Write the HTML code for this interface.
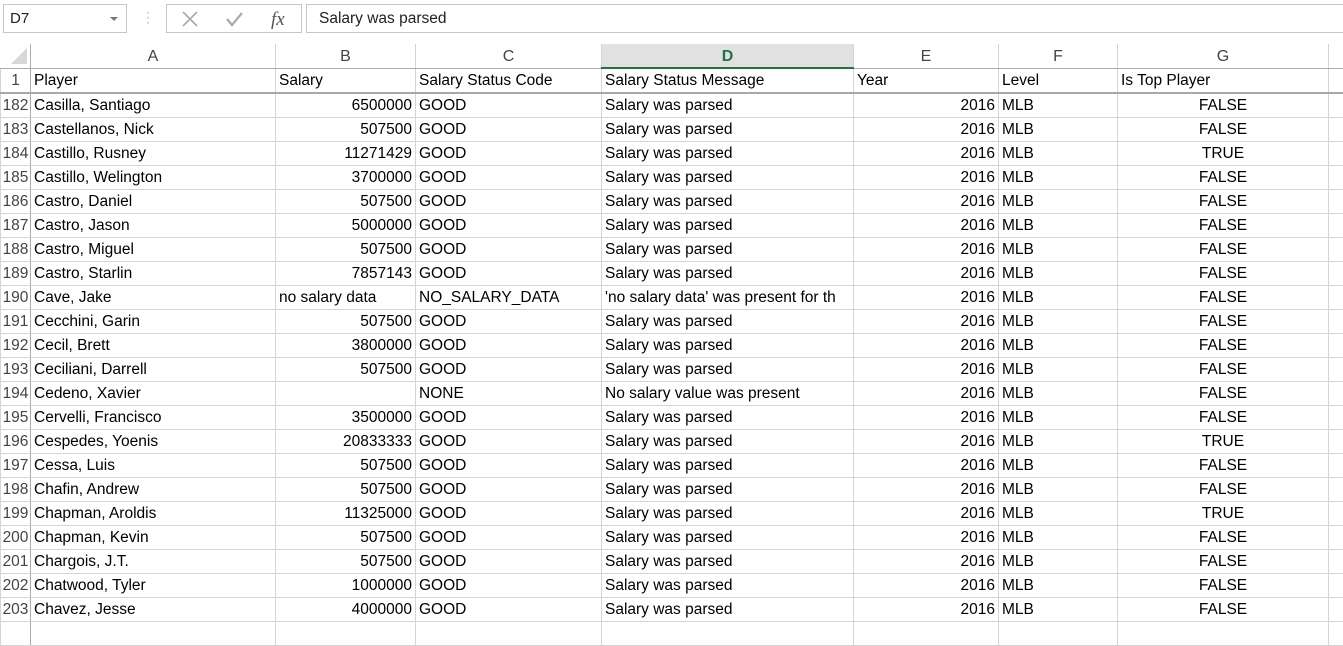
<!DOCTYPE html>
<html><head><meta charset="utf-8">
<style>
body{margin:0;width:1343px;height:625px;overflow:hidden;background:#fff;font-family:"Liberation Sans",sans-serif;position:relative}
.nb{position:absolute;left:3px;top:4px;width:124px;height:29px;border:1px solid #c6c6c6;font-size:15px;line-height:28px;padding-left:6px;box-sizing:border-box;color:#222}
.nb:after{content:"";position:absolute;right:8px;top:12px;border-left:4px solid transparent;border-right:4px solid transparent;border-top:4px solid #777}
.dots{position:absolute;left:146px;top:10px;color:#999;font-size:12px;line-height:5px}
.btns{position:absolute;left:166px;top:4px;width:136px;height:29px;border:1px solid #c6c6c6;box-sizing:border-box}
.fb{position:absolute;left:306px;top:4px;width:1045px;height:29px;border:1px solid #c6c6c6;box-sizing:border-box;font-size:15.5px;line-height:27px;padding-left:12px;color:#222}
table{position:absolute;left:0;top:44px;width:1343px;border-collapse:collapse;table-layout:fixed;font-size:15.5px}
td{height:23px;padding:0 3px;border:1px solid #d4d4d4;white-space:nowrap;overflow:hidden;color:#000;line-height:23px;vertical-align:middle}
tr.h td{height:20px;padding-top:3px;background:#fff;text-align:center;color:#444;border-bottom:1px solid #ababab;font-size:16px;line-height:20px;border-top:none;vertical-align:top}
td.r{text-align:center;color:#444;padding:0;border-right:1px solid #ababab}
tr.h td.sel{background:#e1e1e1;color:#217346;font-weight:bold;border-bottom:2px solid #217346}
tr.f td{border-bottom:2px solid #a8a8a8}
.n{text-align:right}.c{text-align:center}
</style></head><body>
<div class="nb">D7</div>
<div class="dots">·<br>·<br>·</div>
<div class="btns">
<svg width="136" height="28" style="position:absolute;left:0;top:0">
<path d="M16 7l14 14M30 7L16 21" stroke="#aaa" stroke-width="1.6" fill="none"/>
<path d="M60 14l5 6 10-12" stroke="#aaa" stroke-width="2.2" fill="none"/>
<text x="104" y="20" font-family="Liberation Serif" font-style="italic" font-size="19" fill="#555">fx</text>
</svg></div>
<div class="fb">Salary was parsed</div>
<table>
<colgroup><col style="width:30px"><col style="width:245px"><col style="width:140px"><col style="width:186px"><col style="width:252px"><col style="width:145px"><col style="width:119px"><col style="width:211px"><col style="width:15px"></colgroup>
<tr class="h"><td class="r" style="border-left:none;padding-top:0"><svg width="24" height="20" style="display:block;margin:2px 0 0 4px"><path d="M22 2L22 18L6 18Z" fill="#d8d8d8"/></svg></td><td>A</td><td>B</td><td>C</td><td class="sel">D</td><td>E</td><td>F</td><td>G</td><td></td></tr>
<tr class="f"><td class="r">1</td><td>Player</td><td>Salary</td><td>Salary Status Code</td><td>Salary Status Message</td><td>Year</td><td>Level</td><td>Is Top Player</td><td></td></tr>
<tr><td class="r">182</td><td>Casilla, Santiago</td><td class="n">6500000</td><td>GOOD</td><td>Salary was parsed</td><td class="n">2016</td><td>MLB</td><td class="c">FALSE</td><td></td></tr>
<tr><td class="r">183</td><td>Castellanos, Nick</td><td class="n">507500</td><td>GOOD</td><td>Salary was parsed</td><td class="n">2016</td><td>MLB</td><td class="c">FALSE</td><td></td></tr>
<tr><td class="r">184</td><td>Castillo, Rusney</td><td class="n">11271429</td><td>GOOD</td><td>Salary was parsed</td><td class="n">2016</td><td>MLB</td><td class="c">TRUE</td><td></td></tr>
<tr><td class="r">185</td><td>Castillo, Welington</td><td class="n">3700000</td><td>GOOD</td><td>Salary was parsed</td><td class="n">2016</td><td>MLB</td><td class="c">FALSE</td><td></td></tr>
<tr><td class="r">186</td><td>Castro, Daniel</td><td class="n">507500</td><td>GOOD</td><td>Salary was parsed</td><td class="n">2016</td><td>MLB</td><td class="c">FALSE</td><td></td></tr>
<tr><td class="r">187</td><td>Castro, Jason</td><td class="n">5000000</td><td>GOOD</td><td>Salary was parsed</td><td class="n">2016</td><td>MLB</td><td class="c">FALSE</td><td></td></tr>
<tr><td class="r">188</td><td>Castro, Miguel</td><td class="n">507500</td><td>GOOD</td><td>Salary was parsed</td><td class="n">2016</td><td>MLB</td><td class="c">FALSE</td><td></td></tr>
<tr><td class="r">189</td><td>Castro, Starlin</td><td class="n">7857143</td><td>GOOD</td><td>Salary was parsed</td><td class="n">2016</td><td>MLB</td><td class="c">FALSE</td><td></td></tr>
<tr><td class="r">190</td><td>Cave, Jake</td><td>no salary data</td><td>NO_SALARY_DATA</td><td>'no salary data' was present for th</td><td class="n">2016</td><td>MLB</td><td class="c">FALSE</td><td></td></tr>
<tr><td class="r">191</td><td>Cecchini, Garin</td><td class="n">507500</td><td>GOOD</td><td>Salary was parsed</td><td class="n">2016</td><td>MLB</td><td class="c">FALSE</td><td></td></tr>
<tr><td class="r">192</td><td>Cecil, Brett</td><td class="n">3800000</td><td>GOOD</td><td>Salary was parsed</td><td class="n">2016</td><td>MLB</td><td class="c">FALSE</td><td></td></tr>
<tr><td class="r">193</td><td>Ceciliani, Darrell</td><td class="n">507500</td><td>GOOD</td><td>Salary was parsed</td><td class="n">2016</td><td>MLB</td><td class="c">FALSE</td><td></td></tr>
<tr><td class="r">194</td><td>Cedeno, Xavier</td><td class="n"></td><td>NONE</td><td>No salary value was present</td><td class="n">2016</td><td>MLB</td><td class="c">FALSE</td><td></td></tr>
<tr><td class="r">195</td><td>Cervelli, Francisco</td><td class="n">3500000</td><td>GOOD</td><td>Salary was parsed</td><td class="n">2016</td><td>MLB</td><td class="c">FALSE</td><td></td></tr>
<tr><td class="r">196</td><td>Cespedes, Yoenis</td><td class="n">20833333</td><td>GOOD</td><td>Salary was parsed</td><td class="n">2016</td><td>MLB</td><td class="c">TRUE</td><td></td></tr>
<tr><td class="r">197</td><td>Cessa, Luis</td><td class="n">507500</td><td>GOOD</td><td>Salary was parsed</td><td class="n">2016</td><td>MLB</td><td class="c">FALSE</td><td></td></tr>
<tr><td class="r">198</td><td>Chafin, Andrew</td><td class="n">507500</td><td>GOOD</td><td>Salary was parsed</td><td class="n">2016</td><td>MLB</td><td class="c">FALSE</td><td></td></tr>
<tr><td class="r">199</td><td>Chapman, Aroldis</td><td class="n">11325000</td><td>GOOD</td><td>Salary was parsed</td><td class="n">2016</td><td>MLB</td><td class="c">TRUE</td><td></td></tr>
<tr><td class="r">200</td><td>Chapman, Kevin</td><td class="n">507500</td><td>GOOD</td><td>Salary was parsed</td><td class="n">2016</td><td>MLB</td><td class="c">FALSE</td><td></td></tr>
<tr><td class="r">201</td><td>Chargois, J.T.</td><td class="n">507500</td><td>GOOD</td><td>Salary was parsed</td><td class="n">2016</td><td>MLB</td><td class="c">FALSE</td><td></td></tr>
<tr><td class="r">202</td><td>Chatwood, Tyler</td><td class="n">1000000</td><td>GOOD</td><td>Salary was parsed</td><td class="n">2016</td><td>MLB</td><td class="c">FALSE</td><td></td></tr>
<tr><td class="r">203</td><td>Chavez, Jesse</td><td class="n">4000000</td><td>GOOD</td><td>Salary was parsed</td><td class="n">2016</td><td>MLB</td><td class="c">FALSE</td><td></td></tr>
<tr><td class="r"></td><td></td><td></td><td></td><td></td><td></td><td></td><td></td><td></td></tr>
</table>
</body></html>
